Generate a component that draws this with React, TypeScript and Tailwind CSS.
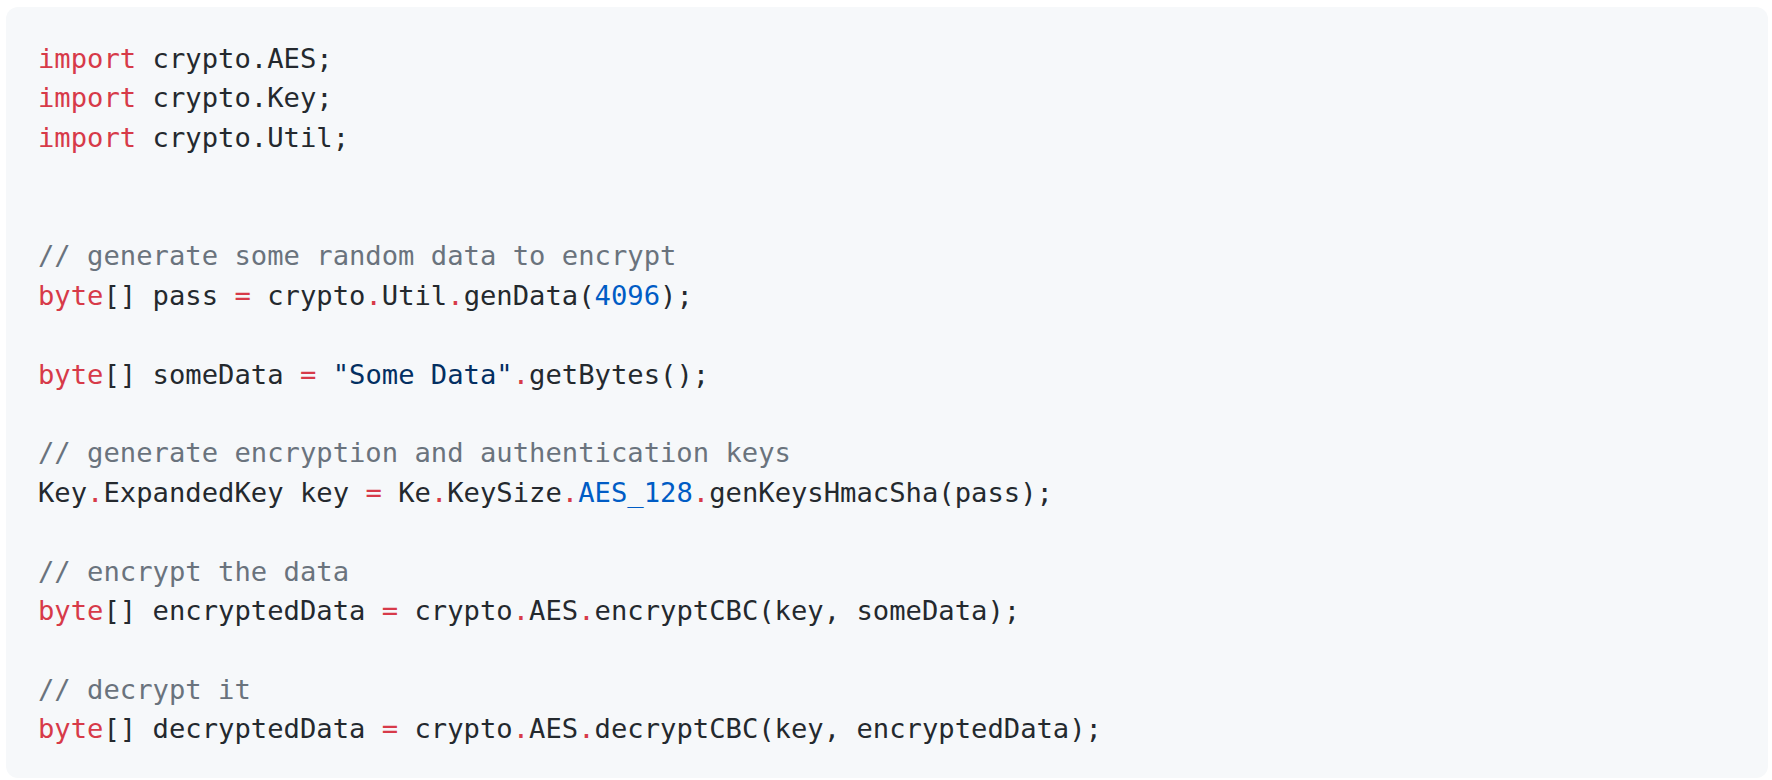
import React from "react";

type Tok = [string, string?];

const K = "text-[#d73a49]";
const C = "text-[#6a737d]";
const N = "text-[#005cc5]";
const S = "text-[#032f62]";

const lines: Tok[][] = [
  [["import", K], [" crypto.AES;"]],
  [["import", K], [" crypto.Key;"]],
  [["import", K], [" crypto.Util;"]],
  [],
  [],
  [["// generate some random data to encrypt", C]],
  [["byte", K], ["[] pass "], ["=", K], [" crypto"], [".", K], ["Util"], [".", K], ["genData("], ["4096", N], [");"]],
  [],
  [["byte", K], ["[] someData "], ["=", K], [" "], ['"Some Data"', S], [".", K], ["getBytes();"]],
  [],
  [["// generate encryption and authentication keys", C]],
  [["Key"], [".", K], ["ExpandedKey key "], ["=", K], [" Ke"], [".", K], ["KeySize"], [".", K], ["AES_128", N], [".", K], ["genKeysHmacSha(pass);"]],
  [],
  [["// encrypt the data", C]],
  [["byte", K], ["[] encryptedData "], ["=", K], [" crypto"], [".", K], ["AES"], [".", K], ["encryptCBC(key, someData);"]],
  [],
  [["// decrypt it", C]],
  [["byte", K], ["[] decryptedData "], ["=", K], [" crypto"], [".", K], ["AES"], [".", K], ["decryptCBC(key, encryptedData);"]],
];

export default function App() {
  return (
    <div className="w-[1772px] h-[780px] bg-white overflow-hidden pl-[6px] pr-[4px] pt-[7px]">
      <pre className="bg-[#f6f8fa] rounded-[12px] px-[32px] pt-[32px] m-0 h-[771px] text-[#24292e] text-[27.2px] leading-[39.45px] font-['DejaVu_Sans_Mono','Liberation_Mono',monospace]">
        {lines.map((l, i) => (
          <div key={i} className="h-[39.45px] whitespace-pre">
            {l.map(([t, c], j) => (
              <span key={j} className={c}>
                {t}
              </span>
            ))}
          </div>
        ))}
      </pre>
    </div>
  );
}
